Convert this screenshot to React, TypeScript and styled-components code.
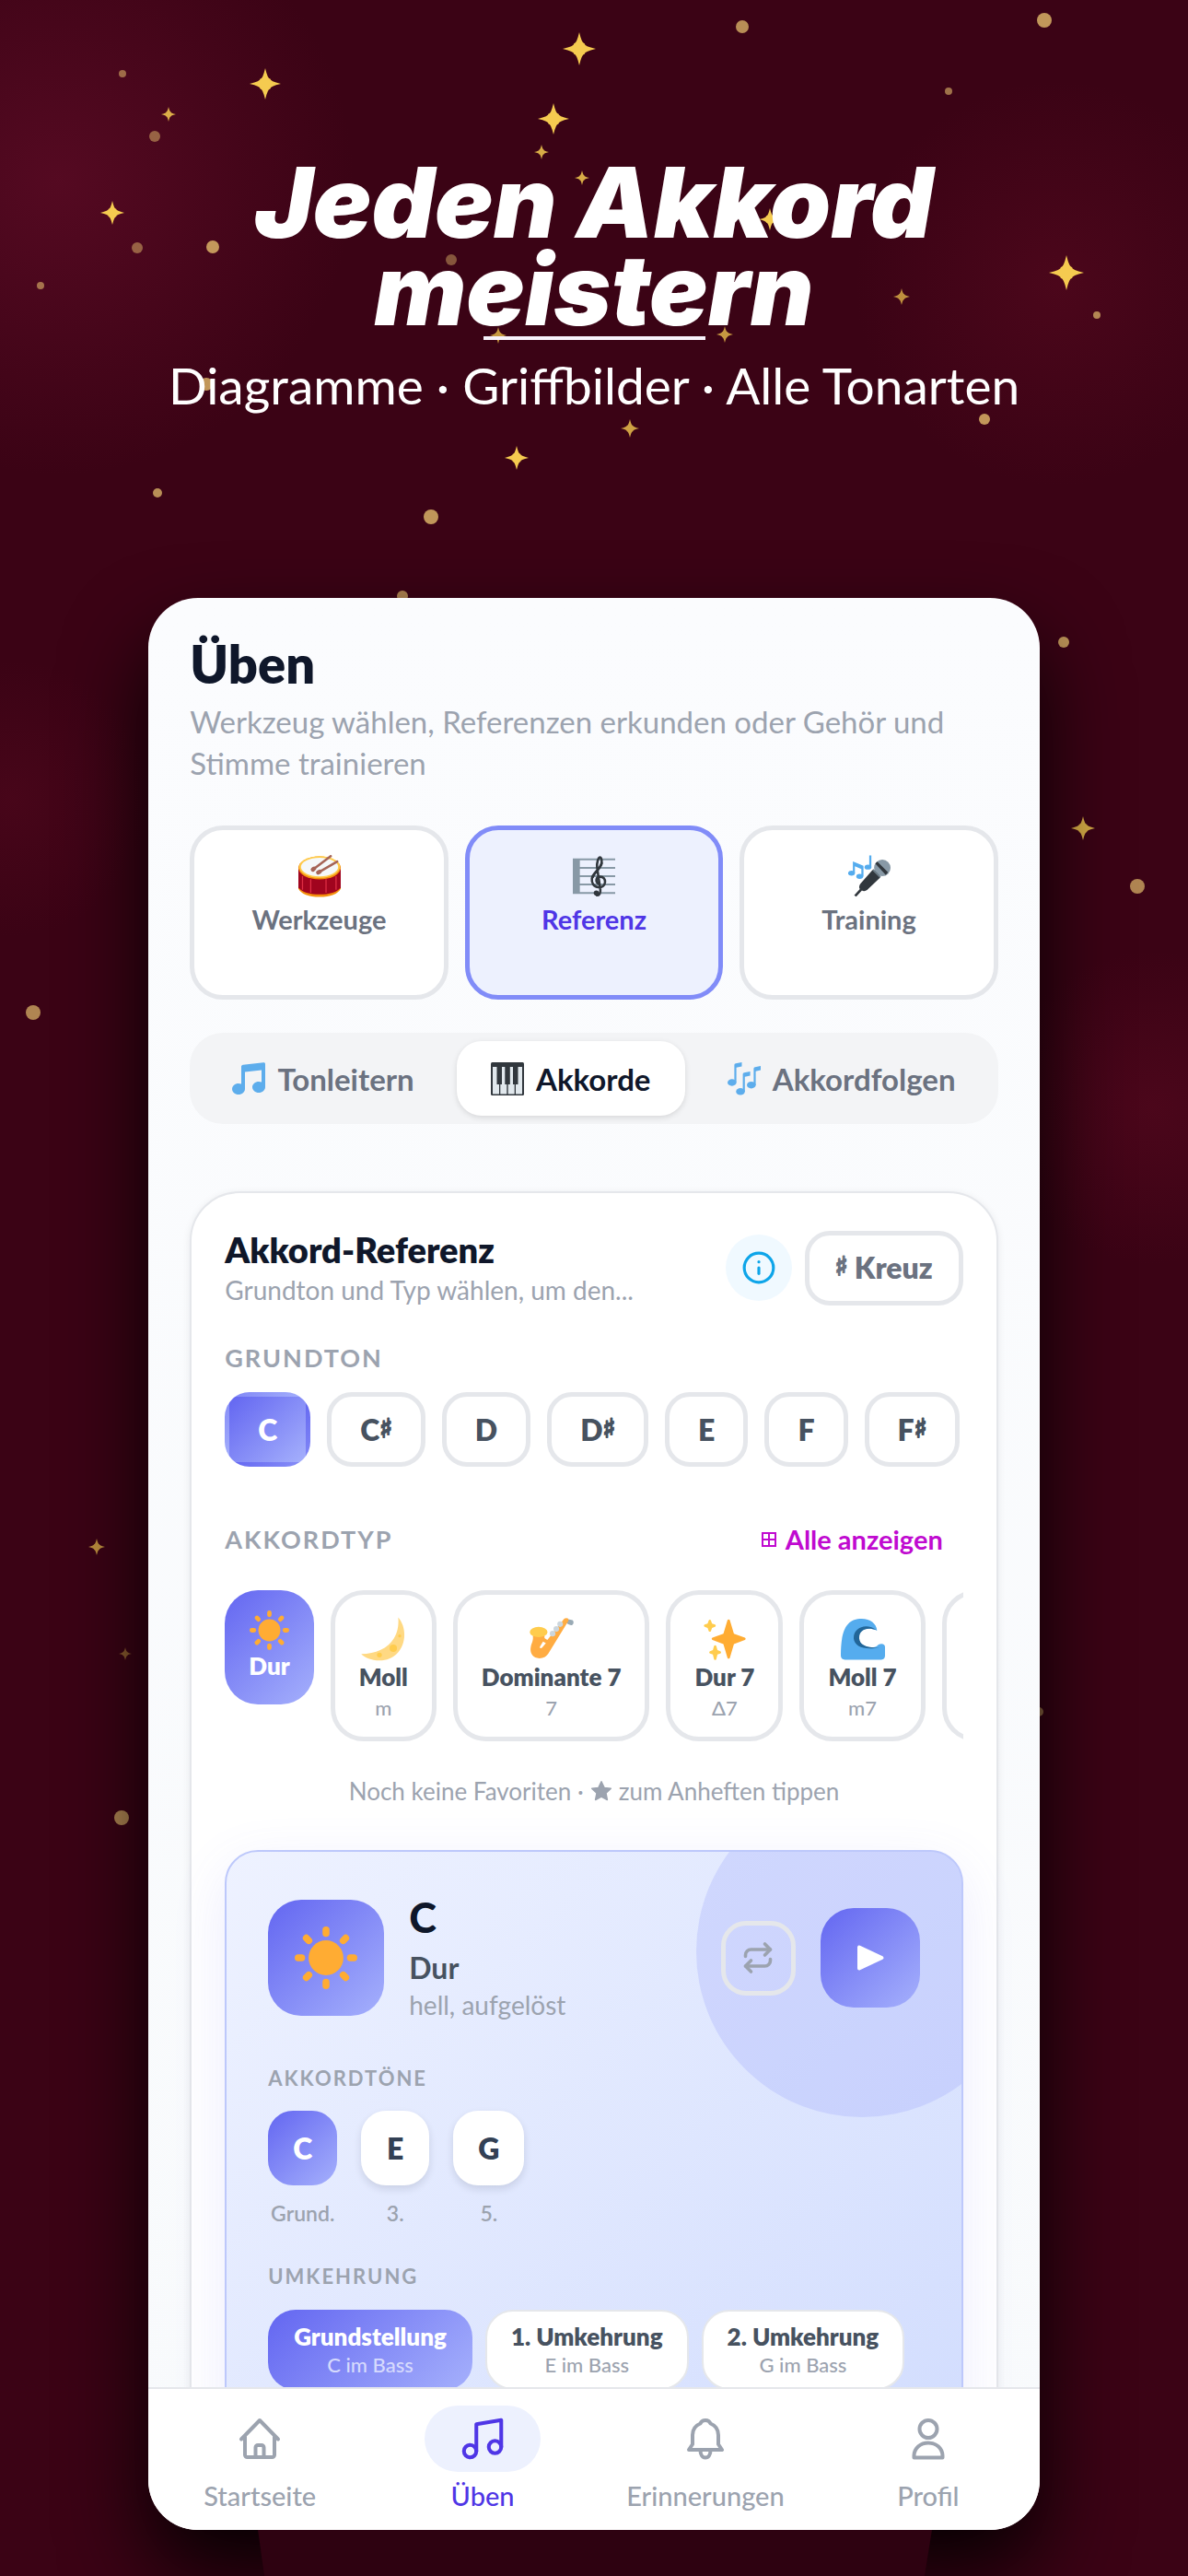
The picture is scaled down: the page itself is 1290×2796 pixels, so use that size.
import React from "react";
import styled, { createGlobalStyle, css } from "styled-components";
import { Music, Repeat, Info } from "lucide-react";

const GlobalStyle = createGlobalStyle`
  *, *::before, *::after { box-sizing: border-box; }
  html, body { margin: 0; padding: 0; background: #3b0315; }
  body { font-family: Lato, "Open Sans", sans-serif; }
  h1, h2, h3, h4, p { margin: 0; font-weight: inherit; }
  button { font: inherit; color: inherit; border: 0; margin: 0; padding: 0; background: none; cursor: pointer; }
  svg { display: block; flex: none; }
`;

const c = {
  ink: "#0f172a",
  slate: "#475260",
  grey: "#6b7280",
  muted: "#9ca3af",
  line: "#e5e7eb",
  accent: "#4f36e6",
  tint: "#edf1fe",
};

const accentFill = css`
  background: linear-gradient(135deg, #6366f1, #a5b0fc);
  color: #fff;
`;

/* ---------- backdrop ---------- */

const Page = styled.div`
  position: relative;
  height: 100vh;
  overflow: hidden;
  display: flex;
  flex-direction: column;
  align-items: center;
  background:
    radial-gradient(circle at 5% 7%, rgba(110, 16, 46, 0.5), rgba(110, 16, 46, 0) 320px),
    radial-gradient(circle at 89% 11%, rgba(100, 12, 36, 0.4), rgba(100, 12, 36, 0) 220px),
    radial-gradient(circle at 1% 31%, rgba(100, 12, 36, 0.3), rgba(100, 12, 36, 0) 150px),
    radial-gradient(circle at 97% 43%, rgba(100, 12, 36, 0.4), rgba(100, 12, 36, 0) 170px),
    #3b0315;
`;

const Sky = styled.svg`
  position: absolute;
  inset: 0;
  width: 100%;
  height: 100%;
`;

const Pedestal = styled.svg`
  position: absolute;
  left: 0;
  bottom: 0;
  width: 100%;
  height: 52px;
`;

const sparks: [number, number, number, number][] = [
  [629, 53, 18, 1], [288, 91, 17, 1], [601, 129, 17, 1], [183, 124, 8, 0.85],
  [588, 165, 8, 0.85], [632, 193, 8, 0.85], [122, 231, 13, 1], [836, 238, 12, 1],
  [1158, 296, 19, 1], [979, 322, 9, 0.7], [541, 364, 9, 0.75], [787, 363, 9, 0.75],
  [684, 465, 10, 0.8], [561, 497, 13, 1], [1176, 899, 13, 0.85], [105, 1679, 9, 0.7],
  [136, 1795, 7, 0.45],
];

const dots: [number, number, number, number][] = [
  [806, 29, 7, 0.75], [1134, 22, 8, 0.8], [133, 80, 4, 0.55], [168, 148, 6, 0.5],
  [1030, 99, 4, 0.6], [149, 269, 6, 0.5], [231, 268, 7, 0.8], [490, 282, 6, 0.45],
  [44, 310, 4, 0.6], [1191, 342, 4, 0.7], [224, 417, 7, 0.8],
  [1069, 455, 6, 0.8], [171, 535, 5, 0.75], [468, 561, 8, 0.8], [437, 647, 6, 0.7],
  [1155, 697, 6, 0.8], [1235, 962, 8, 0.7], [36, 1099, 8, 0.7], [132, 1973, 8, 0.7],
  [1128, 1858, 5, 0.6],
];

const Stars = () => (
  <Sky viewBox="0 0 1290 2796" preserveAspectRatio="xMidYMin slice" aria-hidden="true">
    {dots.map(([x, y, r, o]) => (
      <circle key={`${x}-${y}`} cx={x} cy={y} r={r} fill="#e3bd6c" opacity={o} />
    ))}
    {sparks.map(([x, y, r, o]) => (
      <path
        key={`${x}-${y}`}
        transform={`translate(${x} ${y}) scale(${r})`}
        d="M0-1Q.16-.3 .32-.32 .3-.16 1 0 .3.16 .32.32 .16.3 0 1-.16.3-.32.32-.3.16-1 0-.3-.16-.32-.32-.16-.3 0-1z"
        fill="#f5cb50"
        opacity={o}
      />
    ))}
  </Sky>
);

/* ---------- headline ---------- */

const Hero = styled.header`
  position: relative;
  display: flex;
  flex-direction: column;
  align-items: center;
  padding-top: 172px;
  color: #fff;
  text-align: center;
`;

const Headline = styled.h1`
  font-family: Inter, Lato, sans-serif;
  font-size: 106px;
  line-height: 95px;
  font-weight: 900;
  font-style: italic;
`;

const Rule = styled.div`
  width: 241px;
  height: 4px;
  margin: 3px 0 18px;
  background: #f7f2fb;
`;

const Tagline = styled.p`
  font-size: 55px;
  line-height: 62px;
`;

/* ---------- phone ---------- */

const Phone = styled.main`
  position: relative;
  flex: 1;
  min-height: 0;
  width: 75%;
  margin: 200px 0 50px;
  display: flex;
  flex-direction: column;
  border-radius: 54px;
  background: linear-gradient(#fbfcfe, #f8fafc);
  box-shadow: 0 45px 90px rgba(0, 0, 0, 0.9);
  overflow: hidden;
`;

const Scroll = styled.div`
  flex: 1;
  min-height: 0;
  overflow: hidden;
  padding: 40px 45px 0;
`;

const PageTitle = styled.h2`
  font-size: 56px;
  line-height: 64px;
  font-weight: 800;
  color: ${c.ink};
`;

const Lead = styled.p`
  margin-top: 8px;
  font-size: 33px;
  line-height: 45px;
  color: ${c.muted};
`;

const ToolGrid = styled.div`
  display: grid;
  grid-template-columns: repeat(3, 1fr);
  gap: 18px;
  margin-top: 45px;
`;

const ToolCard = styled.button<{ $active?: boolean }>`
  display: flex;
  flex-direction: column;
  align-items: center;
  gap: 7px;
  min-height: 189px;
  padding-top: 27px;
  border: 5px solid ${(p) => (p.$active ? "#818cf8" : c.line)};
  border-radius: 36px;
  background: ${(p) => (p.$active ? c.tint : "#fff")};
  color: ${(p) => (p.$active ? c.accent : c.grey)};
  font-size: 29px;
  line-height: 34px;
  font-weight: 700;
`;

const Segments = styled.div`
  display: flex;
  gap: 9px;
  margin-top: 36px;
  padding: 9px;
  border-radius: 36px;
  background: #f3f4f6;
`;

const Segment = styled.button<{ $active?: boolean }>`
  flex: 1 1 auto;
  display: flex;
  align-items: center;
  justify-content: center;
  gap: 13px;
  height: 81px;
  border-radius: 27px;
  font-size: 33px;
  line-height: 40px;
  font-weight: 700;
  color: ${(p) => (p.$active ? c.ink : c.grey)};
  ${(p) => p.$active && "background: #fff; box-shadow: 0 2px 6px rgba(0, 0, 0, 0.12);"}
`;

const Card = styled.section`
  margin-top: 73px;
  padding: 39px 36px 60px;
  border: 2px solid ${c.line};
  border-radius: 54px;
  background: #fff;
  box-shadow: 0 2px 8px rgba(15, 23, 42, 0.08);
`;

const CardHead = styled.div`
  display: flex;
  align-items: center;
  gap: 14px;
`;

const CardTitles = styled.div`
  flex: 1;
  min-width: 0;
`;

const CardTitle = styled.h3`
  margin-bottom: 4px;
  font-size: 38px;
  line-height: 44px;
  font-weight: 800;
  color: ${c.ink};
`;

const CardHint = styled.p`
  font-size: 28px;
  line-height: 36px;
  color: ${c.muted};
`;

const InfoButton = styled.button`
  display: grid;
  place-items: center;
  width: 72px;
  height: 72px;
  border-radius: 50%;
  background: #f0f9ff;
  color: #0ea5e9;
`;

const OutlineButton = styled.button`
  height: 81px;
  padding: 0 28px;
  border: 5px solid ${c.line};
  border-radius: 27px;
  font-size: 32px;
  line-height: 40px;
  font-weight: 800;
  color: ${c.grey};
`;

const Sharp = styled.span`
  font-family: "DejaVu Sans", sans-serif;
  font-size: 28px;
  line-height: 24px;
  font-weight: 400;
  vertical-align: 4px;
  -webkit-text-stroke: 2px currentColor;
`;

const Label = styled.h4<{ $small?: boolean }>`
  font-size: ${(p) => (p.$small ? 22 : 27)}px;
  line-height: ${(p) => (p.$small ? 28 : 34)}px;
  font-weight: 700;
  letter-spacing: 2px;
  color: ${c.muted};
`;

const Roots = styled.div`
  display: flex;
  gap: 18px;
  margin-top: 20px;
  overflow: hidden;
`;

const RootChip = styled.button<{ $active?: boolean }>`
  flex: none;
  height: 81px;
  padding: 0 31px;
  border: 5px solid ${c.line};
  border-radius: 27px;
  font-size: 32px;
  line-height: 40px;
  font-weight: 800;
  color: ${c.slate};
  ${(p) =>
    p.$active &&
    css`
      ${accentFill}
      border-color: transparent;
    `}
`;

const Row = styled.div`
  display: flex;
  align-items: center;
  justify-content: space-between;
`;

const ShowAll = styled.button`
  display: flex;
  align-items: center;
  gap: 9px;
  padding-right: 22px;
  font-size: 29px;
  line-height: 34px;
  font-weight: 700;
  color: #c00ad0;
`;

const Types = styled.div`
  display: flex;
  align-items: flex-start;
  gap: 18px;
  margin-top: 38px;
  overflow: hidden;
`;

const TypeCard = styled.button<{ $active?: boolean }>`
  flex: none;
  display: flex;
  flex-direction: column;
  align-items: center;
  height: 164px;
  min-width: 96px;
  padding: 24px 26px 0;
  border: 5px solid ${c.line};
  border-radius: 36px;
  font-size: 26px;
  line-height: 34px;
  font-weight: 800;
  color: ${c.slate};
  ${(p) =>
    p.$active &&
    css`
      ${accentFill}
      height: 124px;
      padding: 22px 26px 0;
      border: 0;
    `}
`;

const TypeCode = styled.span`
  margin-top: 3px;
  font-size: 22px;
  line-height: 28px;
  font-weight: 500;
  color: ${c.muted};
`;

const Favourites = styled.p`
  display: flex;
  justify-content: center;
  align-items: center;
  gap: 7px;
  margin: 37px 0 47px;
  font-size: 26px;
  line-height: 34px;
  color: ${c.muted};
`;

/* ---------- chord panel ---------- */

const Panel = styled.article`
  position: relative;
  padding: 44px 45px 60px;
  border: 2px solid #bdc8fb;
  border-radius: 36px;
  background: linear-gradient(135deg, #eef2ff, #d2ddfe);
  box-shadow: 0 18px 60px rgba(99, 102, 241, 0.12);
  overflow: hidden;
`;

const Bubble = styled.div`
  position: absolute;
  top: -72px;
  right: -72px;
  width: 360px;
  height: 360px;
  border-radius: 50%;
  background: rgba(129, 140, 248, 0.2);
`;

const ChordHead = styled.div`
  position: relative;
  display: flex;
  align-items: center;
  gap: 27px;
`;

const ChordBadge = styled.div`
  display: grid;
  place-items: center;
  width: 126px;
  height: 126px;
  border-radius: 36px;
  ${accentFill}
`;

const ChordText = styled.div`
  flex: 1;
`;

const ChordRoot = styled.h3`
  margin-bottom: 8px;
  font-size: 45px;
  line-height: 54px;
  font-weight: 900;
  color: ${c.ink};
`;

const ChordName = styled.p`
  font-size: 32px;
  line-height: 40px;
  font-weight: 700;
  color: ${c.slate};
`;

const ChordMood = styled.p`
  font-size: 28px;
  line-height: 40px;
  color: ${c.muted};
`;

const LoopButton = styled.button`
  display: grid;
  place-items: center;
  width: 81px;
  height: 81px;
  border: 5px solid ${c.line};
  border-radius: 27px;
  color: ${c.muted};
`;

const PlayButton = styled.button`
  display: grid;
  place-items: center;
  width: 108px;
  height: 108px;
  border-radius: 36px;
  ${accentFill}
`;

const Block = styled.div<{ $top: number }>`
  position: relative;
  margin-top: ${(p) => p.$top}px;
`;

const Notes = styled.div`
  display: flex;
  gap: 26px;
  margin-top: 21px;
`;

const NoteColumn = styled.div`
  display: flex;
  flex-direction: column;
  align-items: center;
  gap: 16px;
  font-size: 23px;
  line-height: 28px;
  font-weight: 600;
  color: ${c.muted};
`;

const NoteTile = styled.button<{ $active?: boolean }>`
  min-width: 74px;
  height: 81px;
  padding: 0 27px;
  border-radius: 27px;
  background: #fff;
  box-shadow: 0 4px 8px rgba(15, 23, 42, 0.12);
  font-size: 32px;
  line-height: 40px;
  font-weight: 800;
  color: #334155;
  ${(p) =>
    p.$active &&
    css`
      ${accentFill}
      box-shadow: none;
    `}
`;

const Inversions = styled.div`
  display: flex;
  gap: 14px;
  margin-top: 22px;
`;

const Inversion = styled.button<{ $active?: boolean }>`
  display: flex;
  flex-direction: column;
  align-items: center;
  padding: 12px 26px;
  border: 2px solid ${(p) => (p.$active ? "transparent" : c.line)};
  border-radius: 30px;
  background: #fff;
  font-size: 26px;
  line-height: 30px;
  font-weight: 800;
  color: ${c.slate};
  ${(p) =>
    p.$active &&
    css`
      ${accentFill}
      background-origin: border-box;
    `}
`;

const BassNote = styled.span<{ $active?: boolean }>`
  margin-top: 3px;
  font-size: 22px;
  line-height: 26px;
  font-weight: 500;
  color: ${(p) => (p.$active ? "#d6dafd" : c.muted)};
`;

/* ---------- tab bar ---------- */

const TabBar = styled.nav`
  display: grid;
  grid-template-columns: repeat(4, 1fr);
  height: 155px;
  padding-top: 18px;
  border-top: 2px solid ${c.line};
  background: #fff;
`;

const Tab = styled.a<{ $active?: boolean }>`
  display: flex;
  flex-direction: column;
  align-items: center;
  gap: 9px;
  font-size: 29px;
  line-height: 34px;
  font-weight: 500;
  text-decoration: none;
  color: ${(p) => (p.$active ? c.accent : c.muted)};
`;

const TabIcon = styled.span<{ $active?: boolean }>`
  display: grid;
  place-items: center;
  width: 126px;
  height: 72px;
  border-radius: 36px;
  ${(p) => p.$active && `background: ${c.tint};`}
`;

/* ---------- drawings ---------- */

type Size = { size: number };

const Emoji = ({ size, children }: Size & { children: React.ReactNode }) => (
  <svg width={size} height={size} viewBox="0 0 36 36" aria-hidden="true">
    {children}
  </svg>
);

const Sun = ({ size }: Size) => (
  <Emoji size={size}>
    <g fill="#ffac33">
      <circle cx="18" cy="18" r="10" />
      {[0, 45, 90, 135, 180, 225, 270, 315].map((a) => (
        <rect key={a} x="16" y="0" width="4" height="6" rx="2" transform={`rotate(${a} 18 18)`} />
      ))}
    </g>
  </Emoji>
);

const Moon = ({ size }: Size) => (
  <Emoji size={size}>
    <path fill="#ffd983" d="M30.3.3C40.5 12 35 35.5 15 35.5 8.500 35.500 3 33 .2 30.200 18 30 32 20 30.300.3z" />
    <g fill="#ffcc4d">
      <circle cx="26.300" cy="25.500" r="3" />
      <circle cx="15" cy="31" r="2" />
      <circle cx="31.500" cy="15.500" r="1.200" />
    </g>
  </Emoji>
);

const Sax = ({ size }: Size) => (
  <Emoji size={size}>
    <path fill="#99aab5" d="M29.500 1.500l5.500 1.200c1.300 1 1 3.300-.6 4-2 .3-4-1.200-5.500-2.700z" />
    <path
      fill="#ffac42"
      fillRule="evenodd"
      d="M2.800 13.500h9.400v3.800l2.300 1.500L27.300 2.600c1-1.600 2.600-2.200 4.200-1.300l.3 1.700L16 28.700c-2 3.600-4.600 5-8 5C2 33.700.2 28.500 1 24.800c.5-3.300 1.500-4 1.800-7zM11 20l-2.500 4.200c-.4 1.200.8 1.900 1.800.8l3-3.700z"
    />
    <ellipse cx="7.400" cy="12.300" rx="7.200" ry="4.200" fill="#ffcc4d" />
    <g fill="#ccd6dd">
      <circle cx="18.800" cy="13.600" r="2.300" />
      <circle cx="21.800" cy="9.800" r="2.300" />
      <circle cx="24.900" cy="5.900" r="2.300" />
    </g>
  </Emoji>
);

const Sparkles = ({ size }: Size) => (
  <Emoji size={size}>
    <path
      fill="#ffac33"
      d="M34.347 16.893l-8.899-3.294-3.323-10.891c-.128-.42-.517-.708-.956-.708-.439 0-.828.288-.956.708l-3.322 10.891-8.900 3.294c-.393.146-.653.519-.653.938 0 .418.26.793.653.938l8.895 3.293 3.324 11.223c.126.424.516.715.959.715.442 0 .833-.291.959-.716l3.324-11.223 8.896-3.293c.391-.144.652-.518.652-.937 0-.418-.261-.792-.653-.938z"
    />
    <path
      fill="#ffcc4d"
      d="M14.347 27.894l-2.314-.856-.9-3.300c-.118-.436-.513-.738-.964-.738-.451 0-.846.302-.965.737l-.9 3.300-2.313.856c-.393.146-.653.52-.653.938 0 .418.26.793.653.938l2.301.853.907 3.622c.112.444.511.756.97.756.459 0 .858-.312.97-.757l.907-3.622 2.301-.853c.393-.144.653-.519.653-.937 0-.418-.26-.793-.653-.937zM10.009 6.231l-2.364-.875-.876-2.365c-.145-.393-.519-.653-.938-.653-.418 0-.792.26-.938.653l-.875 2.365-2.365.875c-.393.146-.653.52-.653.938 0 .418.26.793.653.938l2.365.875.875 2.365c.146.393.52.653.938.653.418 0 .792-.26.938-.653l.875-2.365 2.365-.875c.393-.146.653-.52.653-.938 0-.418-.26-.792-.653-.938z"
    />
  </Emoji>
);

const Wave = ({ size }: Size) => (
  <Emoji size={size}>
    <path
      fill="#55acee"
      d="M0 31.500C0 10 5 1.500 17 1.500c7 0 12 4 12.500 9.500C19 7 14.500 12 14.500 17c0 5 5 8 12 7.800 3.500-.2 3.500-2.800 6.500-2.800 2 0 3 1 3 2.500v7c0 2-1 3.300-3 3.300H3.300c-2 0-3.300-1.300-3.300-3.300z"
    />
    <path fill="#269" d="M29.500 11C21 4.300 10.500 8.500 10.500 17c0 7.500 10 10.500 21 7.700C22 25.800 15 23 15 17c0-6.500 6.500-9.500 14.500-6z" />
  </Emoji>
);

const Drum = ({ size }: Size) => (
  <Emoji size={size}>
    <path fill="#f4900c" d="M0 26h36v2.500C34 33 27 35.600 18 35.600S2 33 0 28.500z" />
    <path fill="#a0041e" d="M0 12h36v15.500c-2.500 4-10 6-18 6s-15.500-2-18-6z" />
    <path
      fill="none"
      stroke="#dd2e44"
      strokeWidth="1"
      d="M3.500 18v11.500M10.500 20.500V32M23.500 20.500V32M32 18v11.500"
    />
    <ellipse cx="18" cy="11" rx="18" ry="9.800" fill="#f4900c" />
    <ellipse cx="18" cy="10.200" rx="17.300" ry="9.200" fill="#ffcc4d" />
    <ellipse cx="18" cy="10.200" rx="15.800" ry="7.900" fill="#f5f8fa" />
    <g stroke="#a66457" strokeWidth="2" strokeLinecap="round">
      <path d="M27.500 1L13 12M33 5.500L17.500 14.500" />
      <path strokeWidth="3.600" d="M13.300 11.600l-1 .8M18 14.300l-1.200.6" />
    </g>
  </Emoji>
);

const Score = ({ size }: Size) => (
  <Emoji size={size}>
    <path
      fill="#8899a6"
      d="M0 3h6v30H0zM6 3h30v1.500H6zM6 10.200h30v1.500H6zM6 17.200h30v1.500H6zM6 24.300h30v1.500H6zM6 31.500h30V33H6z"
    />
    <g fill="none" stroke="#31373d" strokeLinecap="round">
      <path
        strokeWidth="2"
        d="M21.600 24.300c-2.500-1.600-2-5.800 1.500-5.800 3 0 4.500 2.200 4.300 4.600-.3 3.200-3 4.600-5.600 4.300-4-.4-6-3.600-5.600-7.400.5-4.500 7.500-8 8.300-13.500.2-2.500-.4-4.500-1.200-4.500-1.800 0-3 4.500-2.700 8.500l2.800 19c.3 3-1 4.800-3 4.800"
      />
      <path strokeWidth="1.500" d="M24.800 7c-.4 4-6.500 8-7.600 12" />
    </g>
    <circle cx="20" cy="32.300" r="2.200" fill="#31373d" />
  </Emoji>
);

const Microphone = ({ size }: Size) => (
  <Emoji size={size}>
    <g fill="#55acee">
      <ellipse cx="2.800" cy="15.500" rx="2.900" ry="2.100" />
      <ellipse cx="9.800" cy="18.200" rx="2.900" ry="2.100" />
      <ellipse cx="16.800" cy="10.300" rx="2.900" ry="2.100" />
      <path d="M4 5.500l9 3.700v9h-1.800v-6.300L5.700 9.600v6H4zM17.900.3h1.800v10h-1.800z" />
    </g>
    <circle cx="29" cy="11" r="7" fill="#8899a6" />
    <path fill="#31373d" d="M23 7.200l1.800-1.500 9 9-1.800 2.300z" />
    <path fill="#31373d" d="M20.700 12.700l6.500 6.500-10.500 10c-1 1.300-3.500 2-5 1l-4.900 5.300-1.700-1.300 4.800-5.200c-1-1.500-.5-3.600.8-5z" />
    <path fill="#66757f" d="M20.500 12.900l1-.9 6.300 6.400-1 1z" />
  </Emoji>
);

const NoteEmoji = ({ size }: Size) => (
  <Emoji size={size}>
    <path
      fill="#5dadec"
      d="M34.209.206L11.791 2.793C10.806 2.907 10 3.811 10 4.803v18.782C9.090 23.214 8.075 23 7 23c-3.865 0-7 2.685-7 6 0 3.314 3.135 6 7 6s7-2.686 7-6V10.539l18-2.077v13.124c-.91-.372-1.925-.586-3-.586-3.865 0-7 2.685-7 6 0 3.314 3.135 6 7 6s7-2.686 7-6V1.803c0-.992-.806-1.710-1.791-1.597z"
    />
  </Emoji>
);

const NotesEmoji = ({ size }: Size) => (
  <Emoji size={size}>
    <g fill="#5dadec">
      <ellipse cx="4.800" cy="22" rx="4.800" ry="3.700" />
      <ellipse cx="14" cy="31.800" rx="4.800" ry="3.700" />
      <ellipse cx="25.800" cy="24.700" rx="4.800" ry="3.700" />
      <path d="M7.400 3c0-1 .6-1.600 1.500-1.800L15.500 0v4.500L9.600 5.700V22H7.400zM16.600 13c0-1 .6-1.600 1.500-1.800l6.500-1.200v4.500l-5.800 1.200V32h-2.200zM28.400 7c0-1 .6-1.600 1.500-1.800L36.500 4v4.500l-5.900 1.200V25h-2.200z" />
    </g>
  </Emoji>
);

const Piano = ({ size }: Size) => (
  <Emoji size={size}>
    <rect width="36" height="36" rx="1.500" fill="#31373d" />
    <path fill="#e1e8ed" d="M2 5h7v29.500H2zM10.300 5h7v29.500h-7zM18.700 5h7v29.500h-7zM27 5h7v29.500h-7z" />
    <path fill="#31373d" d="M6.500 4h5.500v20H6.500zM15.300 4h5.500v20h-5.500zM24 4h5.500v20H24z" />
  </Emoji>
);

const StarGlyph = () => (
  <svg width="24" height="24" viewBox="0 0 24 24" fill="currentColor" aria-hidden="true">
    <path
      stroke="currentColor"
      strokeWidth="1.500"
      strokeLinejoin="round"
      d="M12 1.800l3.100 6.600 7.200.9-5.300 5 1.400 7.200L12 18l-6.400 3.500L7 14.300 1.700 9.300l7.200-.9z"
    />
  </svg>
);

const GridGlyph = () => (
  <svg width="18" height="18" viewBox="0 0 18 18" fill="none" stroke="currentColor" strokeWidth="2" aria-hidden="true">
    <path d="M2 2h14v14H2zM9 2v14M2 9h14" />
  </svg>
);

const PlayGlyph = () => (
  <svg width="32" height="32" viewBox="0 0 32 32" fill="currentColor" aria-hidden="true">
    <path stroke="currentColor" strokeWidth="4" strokeLinejoin="round" d="M4 4.500v23L28.500 16z" />
  </svg>
);

const Stroke = ({ children }: { children: React.ReactNode }) => (
  <svg
    width="48"
    height="48"
    viewBox="0 0 48 48"
    fill="none"
    stroke="currentColor"
    strokeWidth="4"
    strokeLinecap="round"
    strokeLinejoin="round"
    aria-hidden="true"
  >
    {children}
  </svg>
);

const HomeGlyph = () => (
  <Stroke>
    <path d="M4 24.500L24 4l20 20.500M8 22v19.500A2.500 2.500 0 0010.500 44h27a2.500 2.500 0 002.500-2.500V22" />
    <path d="M19.500 44V33.500a2.500 2.500 0 012.500-2.500h4a2.500 2.500 0 012.500 2.500V44" />
  </Stroke>
);

const BellGlyph = () => (
  <Stroke>
    <path d="M6 36l4-6V20c0-6 3.500-10.500 8.500-12.500C19.500 5 21.500 4 24 4s4.500 1 5.500 3.500C34.500 9.500 38 14 38 20v10l4 6z" />
    <path d="M18.500 36.500c0 4.500 2 8 5.500 8s5.500-3.500 5.500-8" />
  </Stroke>
);

const ProfileGlyph = () => (
  <Stroke>
    <circle cx="24" cy="13.500" r="9.500" />
    <path d="M8.500 44.500V42C9 34 15.500 28.500 24 28.500S39 34 39.500 42v2.500z" />
  </Stroke>
);

/* ---------- data ---------- */

const tools = [
  { name: "Werkzeuge", Icon: Drum },
  { name: "Referenz", Icon: Score, active: true },
  { name: "Training", Icon: Microphone },
];

const segments = [
  { name: "Tonleitern", Icon: NoteEmoji },
  { name: "Akkorde", Icon: Piano, active: true },
  { name: "Akkordfolgen", Icon: NotesEmoji },
];

const roots = ["C", "C♯", "D", "D♯", "E", "F", "F♯"];

const types = [
  { name: "Moll", code: "m", Icon: Moon },
  { name: "Dominante 7", code: "7", Icon: Sax },
  { name: "Dur 7", code: "Δ7", Icon: Sparkles },
  { name: "Moll 7", code: "m7", Icon: Wave },
];

const chordNotes = [
  { note: "C", degree: "Grund." },
  { note: "E", degree: "3." },
  { note: "G", degree: "5." },
];

const inversions = [
  { name: "Grundstellung", bass: "C im Bass" },
  { name: "1. Umkehrung", bass: "E im Bass" },
  { name: "2. Umkehrung", bass: "G im Bass" },
];

export default function App() {
  return (
    <>
      <GlobalStyle />
      <Page>
        <Stars />
        <Hero>
          <Headline>
            Jeden Akkord
            <br />
            meistern
          </Headline>
          <Rule />
          <Tagline>Diagramme · Griffbilder · Alle Tonarten</Tagline>
        </Hero>

        <Phone>
          <Scroll>
            <PageTitle>Üben</PageTitle>
            <Lead>Werkzeug wählen, Referenzen erkunden oder Gehör und Stimme trainieren</Lead>

            <ToolGrid>
              {tools.map(({ name, Icon, active }) => (
                <ToolCard key={name} $active={active} aria-pressed={!!active}>
                  <Icon size={46} />
                  {name}
                </ToolCard>
              ))}
            </ToolGrid>

            <Segments>
              {segments.map(({ name, Icon, active }) => (
                <Segment key={name} $active={active} aria-pressed={!!active}>
                  <Icon size={36} />
                  {name}
                </Segment>
              ))}
            </Segments>

            <Card>
              <CardHead>
                <CardTitles>
                  <CardTitle>Akkord-Referenz</CardTitle>
                  <CardHint>Grundton und Typ wählen, um den...</CardHint>
                </CardTitles>
                <InfoButton aria-label="Info">
                  <Info size={38} strokeWidth={2} />
                </InfoButton>
                <OutlineButton>
                  <Sharp>♯</Sharp> Kreuz
                </OutlineButton>
              </CardHead>

              <Block $top={39}>
                <Label>GRUNDTON</Label>
                <Roots>
                  {roots.map((root, i) => (
                    <RootChip key={root} $active={i === 0}>
                      {root[0]}
                      {root[1] && <Sharp>{root[1]}</Sharp>}
                    </RootChip>
                  ))}
                </Roots>
              </Block>

              <Block $top={62}>
                <Row>
                  <Label>AKKORDTYP</Label>
                  <ShowAll>
                    <GridGlyph />
                    Alle anzeigen
                  </ShowAll>
                </Row>
                <Types>
                  <TypeCard $active>
                    <Sun size={43} />
                    Dur
                  </TypeCard>
                  {types.map(({ name, code, Icon }) => (
                    <TypeCard key={name}>
                      <Icon size={48} />
                      {name}
                      <TypeCode>{code}</TypeCode>
                    </TypeCard>
                  ))}
                  <TypeCard aria-label="Weitere" />
                </Types>
              </Block>

              <Favourites>
                Noch keine Favoriten · <StarGlyph /> zum Anheften tippen
              </Favourites>

              <Panel>
                <Bubble />
                <ChordHead>
                  <ChordBadge>
                    <Sun size={68} />
                  </ChordBadge>
                  <ChordText>
                    <ChordRoot>C</ChordRoot>
                    <ChordName>Dur</ChordName>
                    <ChordMood>hell, aufgelöst</ChordMood>
                  </ChordText>
                  <LoopButton aria-label="Wiederholen">
                    <Repeat size={36} strokeWidth={2.4} />
                  </LoopButton>
                  <PlayButton aria-label="Abspielen">
                    <PlayGlyph />
                  </PlayButton>
                </ChordHead>

                <Block $top={46}>
                  <Label $small>AKKORDTÖNE</Label>
                  <Notes>
                    {chordNotes.map(({ note, degree }, i) => (
                      <NoteColumn key={note}>
                        <NoteTile $active={i === 0}>{note}</NoteTile>
                        {degree}
                      </NoteColumn>
                    ))}
                  </Notes>
                </Block>

                <Block $top={41}>
                  <Label $small>UMKEHRUNG</Label>
                  <Inversions>
                    {inversions.map(({ name, bass }, i) => (
                      <Inversion key={name} $active={i === 0}>
                        {name}
                        <BassNote $active={i === 0}>{bass}</BassNote>
                      </Inversion>
                    ))}
                  </Inversions>
                </Block>
              </Panel>
            </Card>
          </Scroll>

          <TabBar>
            <Tab href="#start">
              <TabIcon>
                <HomeGlyph />
              </TabIcon>
              Startseite
            </Tab>
            <Tab href="#ueben" $active aria-current="page">
              <TabIcon $active>
                <Music size={54} strokeWidth={1.8} />
              </TabIcon>
              Üben
            </Tab>
            <Tab href="#erinnerungen">
              <TabIcon>
                <BellGlyph />
              </TabIcon>
              Erinnerungen
            </Tab>
            <Tab href="#profil">
              <TabIcon>
                <ProfileGlyph />
              </TabIcon>
              Profil
            </Tab>
          </TabBar>
        </Phone>
        <Pedestal viewBox="0 0 1290 52" preserveAspectRatio="xMidYMax slice" aria-hidden="true">
          <path d="M280 2h732l-8 50H287z" fill="#2e0211" />
        </Pedestal>
      </Page>
    </>
  );
}
